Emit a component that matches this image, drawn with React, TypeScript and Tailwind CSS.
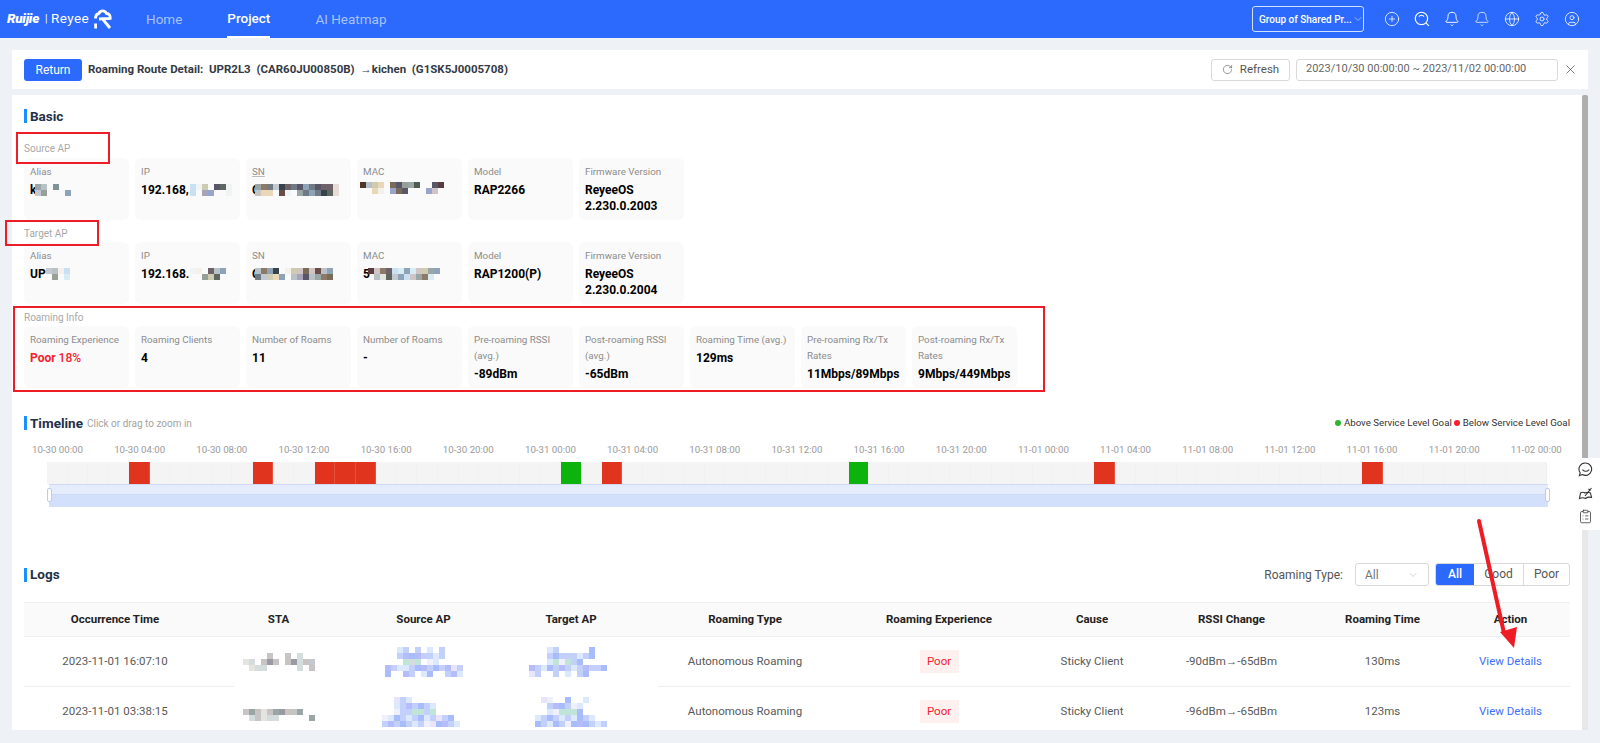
import { Bell, ChevronDown, CirclePlus, CircleUser, ClipboardList, Globe, RotateCw, Settings, X } from 'lucide-react'
import type { ReactNode } from 'react'

// blurred-out values in the screenshot, one letter per tile
const tint: Record<string, string> = {
  a: '#9aa6a6', b: '#b8c2c6', c: '#7d9396', d: '#c4c8d0', e: '#97a096', f: '#8ea3b8', g: '#c8e0f2',
  h: '#f0f4f4', i: '#cfcbb0', j: '#5a566a', k: '#5e6660', l: '#a8a4b8', m: '#98a4cc', n: '#8c7a66',
  o: '#707a84', p: '#d0c4c4', q: '#36424c', r: '#6e6268', s: '#e8dcd8', t: '#e8d8b8', u: '#6a4c48',
  v: '#4e3628', w: '#7a6a58', x: '#4e5c50', y: '#5a3c40', z: '#d8ecf4',
  A: '#b4bcfa', B: '#c4d0fc', C: '#dce8fc', D: '#a8bcfc', E: '#e8e4fc', F: '#c0e4d8', G: '#f0f0fc',
  H: '#c8c4c4', I: '#9a9aa4', J: '#d4dcdc', K: '#e4e4e0', L: '#f4f0ec',
}

function Mosaic({ rows }: { rows: string[] }) {
  const cols = rows[0].length
  return (
    <svg width={cols * 6} height={rows.length * 6} className="shrink-0">
      {rows.map((row, y) =>
        row.split('').map((ch, x) =>
          ch === '.' ? null : <rect key={`${x}-${y}`} x={x * 6} y={y * 6} width={6} height={6} fill={tint[ch]} />,
        ),
      )}
    </svg>
  )
}

function Blur({ text, rows, gap = 0 }: { text?: string; rows: string[]; gap?: number }) {
  return (
    <span className="flex items-center">
      {text}
      <span style={{ marginLeft: gap }}>
        <Mosaic rows={rows} />
      </span>
    </span>
  )
}

function Card({ label, children }: { label: ReactNode; children: ReactNode }) {
  return (
    <div className="w-[105px] h-[62px] shrink-0 rounded-md bg-[#fafafa] px-[6px] pt-[6px]">
      <div className="text-[9.8px] leading-4 text-[#8c8c8c]">{label}</div>
      <div className="mt-[2px] text-[12px] font-bold leading-4 text-black">{children}</div>
    </div>
  )
}

function Heading({ children }: { children: ReactNode }) {
  return (
    <h2 className="flex h-[14px] items-center border-l-[3px] border-[#1890ff] pl-[3px] text-[13.5px] font-bold text-[#22304a]">
      {children}
    </h2>
  )
}

function SearchIcon() {
  return (
    <svg width="16" height="16" viewBox="0 0 15 15" fill="none" stroke="white" strokeWidth="1.1">
      <circle cx="7" cy="7" r="5.8" />
      <path d="M4.6 5.2 A3 3 0 0 1 9.4 5.2" />
      <path d="M11.3 11.3 L14 14" />
    </svg>
  )
}

function Logo() {
  return (
    <div className="flex w-[105px] items-center text-white">
      <span className="w-[37px] text-[13.5px] font-black italic leading-none tracking-[-0.3px]">Ruijie</span>
      <span className="ml-[1px] w-[6px] text-[10px] leading-none">|</span>
      <span className="w-[38px] text-[13.5px] leading-none tracking-[0.4px]">Reyee</span>
      <svg width="18" height="20" viewBox="0 0 18 20" fill="none" stroke="white" strokeWidth="2.8" className="ml-[5px] shrink-0">
        <path d="M1.5 9.5 C1.5 5 3.5 5 5 4.5 C6 1 11 0.8 12.5 4.5 C15 4.6 16.5 6.4 16.2 9.5 L5 10" />
        <path d="M9 10.5 L16 19" />
        <path d="M1.6 14.5 L1.6 19.5" />
      </svg>
    </div>
  )
}

function Header() {
  return (
    <header className="flex h-[38px] items-center bg-[#2b6afd] pl-[7px] pr-[13px]">
      <Logo />
      <nav className="ml-[34px] flex h-full gap-[45px] text-[13.5px]">
        <a className="flex items-center text-[#a9c3ff]">Home</a>
        <a className="flex items-center border-b-2 border-white font-medium text-white">Project</a>
        <a className="flex items-center text-[#a9c3ff]">AI Heatmap</a>
      </nav>
      <div className="ml-auto flex h-[26px] w-[112px] items-center justify-between whitespace-nowrap rounded-[3px] border border-[#cfe0ff] pl-[6px] pr-[3px] text-[10px] font-medium text-white">
        <span>Group of Shared Pr...</span>
        <ChevronDown size={12} strokeWidth={1} className="shrink-0" />
      </div>
      <div className="ml-[13px] flex text-white">
        <span className="flex w-[30px] justify-center"><CirclePlus size={16} strokeWidth={1.2} /></span>
        <span className="flex w-[30px] justify-center"><SearchIcon /></span>
        <span className="flex w-[30px] justify-center"><Bell size={16} strokeWidth={1.4} /></span>
        <span className="flex w-[30px] justify-center"><Bell size={16} strokeWidth={1.1} /></span>
        <span className="flex w-[30px] justify-center"><Globe size={16} strokeWidth={1.2} /></span>
        <span className="flex w-[30px] justify-center"><Settings size={16} strokeWidth={1.2} /></span>
        <span className="flex w-[30px] justify-center"><CircleUser size={16} strokeWidth={1.2} /></span>
      </div>
    </header>
  )
}

function TopBar() {
  return (
    <div className="mx-3 mt-3 flex h-[39px] items-center bg-white pl-3 pr-[10px]">
      <button className="h-[22px] w-[58px] rounded-[3px] bg-[#2b6afd] text-[12px] text-white">Return</button>
      <span className="ml-[6px] whitespace-pre text-[11.5px] font-bold text-[#333a45]">
        Roaming Route Detail:  UPR2L3  (CAR60JU00850B)  →kichen  (G1SK5J0005708)
      </span>
      <button className="ml-auto flex h-[22px] w-[79px] items-center justify-center gap-[7px] rounded-[3px] border border-[#d9d9d9] text-[11.5px] text-[#555]">
        <RotateCw size={11} strokeWidth={1.3} />
        Refresh
      </button>
      <div className="ml-[6px] flex h-[22px] w-[262px] items-center rounded-[3px] border border-[#d9d9d9] pl-[9px] text-[11px] text-[#666]">
        2023/10/30 00:00:00 ~ 2023/11/02 00:00:00
      </div>
      <span className="ml-[4px] flex w-4 justify-center text-[#444]">
        <X size={15} strokeWidth={1.1} />
      </span>
    </div>
  )
}

const timeLabels = [
  '10-30 00:00', '10-30 04:00', '10-30 08:00', '10-30 12:00', '10-30 16:00', '10-30 20:00',
  '10-31 00:00', '10-31 04:00', '10-31 08:00', '10-31 12:00', '10-31 16:00', '10-31 20:00',
  '11-01 00:00', '11-01 04:00', '11-01 08:00', '11-01 12:00', '11-01 16:00', '11-01 20:00', '11-02 00:00',
]

const redHours = [4, 10, 13, 14, 15, 27, 51, 64]
const greenHours = [25, 39]

function Timeline() {
  return (
    <section className="mt-[28px]">
      <div className="flex h-[14px] items-center justify-between">
        <div className="flex items-center">
          <Heading>Timeline</Heading>
          <span className="ml-[4px] text-[10px] text-[#a3a3a3]">Click or drag to zoom in</span>
        </div>
        <div className="flex items-center text-[9.7px] text-[#333]">
          <span className="mr-[3px] h-[6px] w-[6px] rounded-full bg-[#2db52d]" />
          Above Service Level Goal
          <span className="ml-[2px] mr-[3px] h-[6px] w-[6px] rounded-full bg-[#f5222d]" />
          Below Service Level Goal
        </div>
      </div>
      <div className="-ml-[1.5px] mt-[12px] flex h-4 w-[1549px] justify-between text-[9.7px] leading-4 text-[#9a9a9a]">
        {timeLabels.map((t) => (
          <span key={t} className="w-[70px] text-center">{t}</span>
        ))}
      </div>
      <div className="ml-[23px] mt-[4px] w-[1500px]">
        <div className="flex h-[22px]">
          {Array.from({ length: 73 }, (_, i) => (
            <div
              key={i}
              className={
                redHours.includes(i)
                  ? 'flex-1 border-r border-[#e6503c] bg-[#e0341f]'
                  : greenHours.includes(i)
                    ? 'flex-1 bg-[#0db30d]'
                    : 'flex-1 border-r border-[#f1f1f1] bg-[#f4f4f4]'
              }
            />
          ))}
        </div>
        <div className="relative ml-[2px] h-[23px] w-[1499px]">
          <div className="h-[11px] border-y border-[#ced9f6] bg-[#e5edfd]" />
          <div className="h-[12px] bg-[#d3e0fb]" />
          <span className="absolute -left-[2px] top-[4px] h-[14px] w-[5px] rounded-[2px] border border-[#bccbf0] bg-white" />
          <span className="absolute -right-[2px] top-[4px] h-[14px] w-[5px] rounded-[2px] border border-[#bccbf0] bg-white" />
        </div>
      </div>
    </section>
  )
}

const tableCols = 'grid grid-cols-[182px_145px_145px_150px_198px_190px_116px_163px_139px_117px]'

const staRows = [
  ['....H..H.J..', 'KJ.HIH.HIJHd', '.KJJ.....J.H'],
  ['............', 'HaHKHaIHHa..', '.JHKJJ.....a'],
]
const sourceRows = [
  ['..CB.B.C.B...', '..BADABBCB...', '...FJF.GC....', 'ABCCBDABDBAEB', 'D..AB.CD..BAC'],
  ['..EBC.........', '..CBABDBC....', '..GBBFFBF....', 'GCDBCBDCBEBD.', 'BABDBCBGEDABC'],
]
const targetRows = [
  ['...CB.....D...', '...BDBBBCBD...', '...CFGFBD.....', 'ABCDBABCBABBD.', 'EB..B.C.BD....'],
  ['..EG..D..C....', '...BADBGC.....', '...CGFFFD.....', '.CBDBCBCDBC...', '.DBCDBGDADBCB.'],
]

const logs = [
  { time: '2023-11-01 16:07:10', rssi: '-90dBm→-65dBm', cost: '130ms' },
  { time: '2023-11-01 03:38:15', rssi: '-96dBm→-65dBm', cost: '123ms' },
]

function Logs() {
  return (
    <section className="mt-[56px]">
      <div className="flex h-[23px] items-center">
        <Heading>Logs</Heading>
        <span className="ml-auto text-[12px] text-[#555]">Roaming Type:</span>
        <div className="ml-3 flex h-[23px] w-[74px] items-center justify-between rounded-[3px] border border-[#d9d9d9] px-[9px] text-[12px] text-[#777]">
          All
          <ChevronDown size={12} strokeWidth={1} className="text-[#aaa]" />
        </div>
        <div className="ml-[6px] flex h-[23px] w-[135px] overflow-hidden rounded-[3px] border border-[#d9d9d9] text-center text-[12px] leading-[21px] text-[#555]">
          <span className="w-[38px] bg-[#2b6afd] font-medium text-white">All</span>
          <span className="w-[50px] border-r border-[#d9d9d9]">Good</span>
          <span className="flex-1">Poor</span>
        </div>
      </div>
      <div className="mt-[16px]">
        <div className={`${tableCols} h-[35px] items-center border-y border-[#efefef] bg-[#fafafa] text-center text-[11.5px] font-bold text-[#222]`}>
          <span>Occurrence Time</span>
          <span>STA</span>
          <span>Source AP</span>
          <span>Target AP</span>
          <span>Roaming Type</span>
          <span>Roaming Experience</span>
          <span>Cause</span>
          <span>RSSI Change</span>
          <span>Roaming Time</span>
          <span>Action</span>
        </div>
        {logs.map((log, i) => (
          <div
            key={log.time}
            className={`${tableCols} relative h-[50px] items-center border-b border-[#efefef] text-center text-[11.5px] text-[#595959]`}
          >
            {i === 1 && <span className="absolute -top-[2px] left-[210px] h-[3px] w-[424px] bg-white" />}
            <span>{log.time}</span>
            <span className="flex justify-center"><Mosaic rows={staRows[i]} /></span>
            <span className="flex justify-center"><Mosaic rows={sourceRows[i]} /></span>
            <span className="flex justify-center"><Mosaic rows={targetRows[i]} /></span>
            <span>Autonomous Roaming</span>
            <span className="flex justify-center">
              <span className="flex h-[23px] w-[39px] items-center justify-center bg-[#fff0f0] text-[#f5222d]">Poor</span>
            </span>
            <span>Sticky Client</span>
            <span>{log.rssi}</span>
            <span>{log.cost}</span>
            <a className="text-[#3d6ffb]">View Details</a>
          </div>
        ))}
      </div>
    </section>
  )
}

function Panel() {
  return (
    <main className="mx-3 mt-[6px] flex h-[635px] overflow-hidden bg-white">
      <div className="w-[1570px] shrink-0 px-3 pt-[14px]">
        <Heading>Basic</Heading>

        <div className="mt-[18px] mb-[1px] h-4 text-[10px] leading-4 text-[#a8a8a8]">Source AP</div>
        <div className="flex gap-[6px]">
          <Card label="Alias"><Blur text="k" gap={-1} rows={['ab.c..', 'de...f']} /></Card>
          <Card label="IP"><Blur text="192.168," rows={['ghi.jkh', 'g.lm..h']} gap={1} /></Card>
          <Card label={<span className="underline decoration-[#bbb]">SN</span>}>
            <Blur text="C" gap={-5} rows={['anodqrojfojrrs', 'Htt.uh.aofoqks']} />
          </Card>
          <Card label="MAC"><Blur gap={-3} rows={['vbit.wjeax..jy', '..tL.mwj...mp.']} /></Card>
          <Card label="Model">RAP2266</Card>
          <Card label="Firmware Version">ReyeeOS<br />2.230.0.2003</Card>
        </div>

        <div className="mt-[6px] h-4 text-[10px] leading-4 text-[#a8a8a8]">Target AP</div>
        <div className="flex gap-[6px]">
          <Card label="Alias"><Blur text="UP" gap={0} rows={['dbLg', '.e.z']} /></Card>
          <Card label="IP"><Blur text="192.168." rows={['hL.rbf', '..eik.']} gap={1} /></Card>
          <Card label="SN"><Blur text="C" gap={-5} rows={['bnfq.Lipwpubf', 'oditf.bljbanw']} /></Card>
          <Card label="MAC"><Blur text="5" gap={-2} rows={['ypnrgzfzpiaf', '.bKkdfgpanz.']} /></Card>
          <Card label="Model">RAP1200(P)</Card>
          <Card label="Firmware Version">ReyeeOS<br />2.230.0.2004</Card>
        </div>

        <div className="mt-[6px] h-4 text-[10px] leading-4 text-[#a8a8a8]">Roaming Info</div>
        <div className="flex gap-[6px]">
          <Card label="Roaming Experience">
            <span className="text-[#f5222d]">Poor <span className="font-medium">18%</span></span>
          </Card>
          <Card label="Roaming Clients">4</Card>
          <Card label="Number of Roams">11</Card>
          <Card label="Number of Roams">-</Card>
          <Card label="Pre-roaming RSSI (avg.)">-89dBm</Card>
          <Card label="Post-roaming RSSI (avg.)">-65dBm</Card>
          <Card label="Roaming Time (avg.)">129ms</Card>
          <Card label="Pre-roaming Rx/Tx Rates">11Mbps/89Mbps</Card>
          <Card label="Post-roaming Rx/Tx Rates">9Mbps/449Mbps</Card>
        </div>

        <Timeline />
        <Logs />
      </div>
      <div className="w-[6px] shrink-0 bg-[#e8e8e8]">
        <div className="h-[400px] rounded-t-[2px] bg-[#b0aeac]" />
      </div>
    </main>
  )
}

function FloatTools() {
  return (
    <div className="absolute right-0 top-[458px] flex h-[72px] w-[30px] flex-col items-center justify-between rounded-l bg-white py-[3px] text-[#333]">
      <svg width="15" height="15" viewBox="0 0 15 15" fill="none" stroke="currentColor" strokeWidth="1.1" className="mt-[1px]">
        <path d="M7.8 1 A6.2 6.2 0 1 1 4.4 12.6 L1.4 13.6 L2.2 10.8 A6.2 6.2 0 0 1 7.8 1 Z" />
        <path d="M4.4 7.6 Q7.8 11 11.2 7.6" />
      </svg>
      <svg width="15" height="15" viewBox="0 0 15 15" fill="none" stroke="currentColor" strokeWidth="1.1">
        <path d="M1.5 12.5 L2.5 7 Q5 5.5 7 7 Q9.5 5.5 12.5 7 L13.5 11.5 Q10 10.5 7.5 12.5 Q5 11 1.5 12.5 Z" />
        <path d="M7 10 L13.5 2 M10.5 3 L12.5 4.5" />
      </svg>
      <ClipboardList size={15} strokeWidth={1.2} className="mb-[3px]" />
    </div>
  )
}

export default function App() {
  return (
    <div className="relative h-[743px] w-[1600px] overflow-hidden bg-[#eef2f6] font-['Roboto','Noto_Sans',sans-serif]">
      <Header />
      <TopBar />
      <Panel />
      <FloatTools />

      {/* red annotation boxes and arrow */}
      <div className="absolute left-[16px] top-[132px] h-[32px] w-[94px] border-2 border-[#ee1c25]" />
      <div className="absolute left-[5px] top-[220px] h-[26px] w-[94px] border-2 border-[#ee1c25]" />
      <div className="absolute left-[13px] top-[306px] h-[86px] w-[1032px] border-2 border-[#ee1c25]" />
      <svg width="60" height="140" viewBox="0 0 60 140" className="absolute left-[1470px] top-[515px]">
        <path d="M9 6 L34 118" stroke="#ee1c25" strokeWidth="4" strokeLinecap="round" fill="none" />
        <path d="M30 117 L47 112 L44 133 Z" fill="#ee1c25" />
      </svg>
    </div>
  )
}
